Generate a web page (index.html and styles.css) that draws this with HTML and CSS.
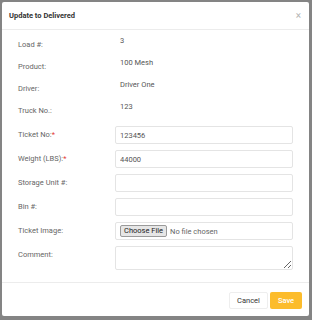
FILE: index.html
```html
<!DOCTYPE html>
<html lang="en">
<head>
  <meta charset="UTF-8" />
  <title>Update to Delivered</title>
  <link rel="stylesheet" href="styles.css">
</head>
<body>
  <div class="modal">
    <div class="modal-header">
      <h5 class="modal-title">Update to Delivered</h5>
      <span class="close">&times;</span>
    </div>
    <div class="modal-body">
      <div class="info">
        <div class="row"><label>Load #:</label><div class="value">3</div></div>
        <div class="row"><label>Product:</label><div class="value">100 Mesh</div></div>
        <div class="row"><label>Driver:</label><div class="value">Driver One</div></div>
        <div class="row"><label>Truck No.:</label><div class="value">123</div></div>
      </div>
      <div class="fields">
        <div class="row"><label>Ticket No:<span class="req">*</span></label><input class="input" type="text" value="123456"></div>
        <div class="row"><label>Weight (LBS):<span class="req">*</span></label><input class="input" type="text" value="44000"></div>
        <div class="row"><label>Storage Unit #:</label><input class="input" type="text"></div>
        <div class="row"><label>Bin #:</label><input class="input" type="text"></div>
        <div class="row">
          <label>Ticket Image:</label>
          <div class="input file-box"><span class="file-btn">Choose File</span><span class="file-name">No file chosen</span></div>
        </div>
        <div class="row"><label>Comment:</label><textarea class="input comment"></textarea></div>
      </div>
    </div>
    <div class="modal-footer">
      <button class="btn btn-cancel">Cancel</button>
      <button class="btn btn-save">Save</button>
    </div>
  </div>
</body>
</html>
```

FILE: styles.css
```css
body {
  margin: 0;
  padding: 2px 3px 4px 2px;
  background-color: #848484;
  font-family: Roboto, 'Liberation Sans', sans-serif;
  font-size: 7.5px;
}
.modal {
  width: 307px;
  background: #fff;
  border-radius: 2px;
  display: flex;
  flex-direction: column;
}
.modal-header {
  height: 27px;
  border-bottom: 1px solid #ececec;
  display: flex;
  align-items: center;
  justify-content: space-between;
  padding: 0 8px 0 7px;
}
.modal-title {
  margin: 0;
  font-size: 7.5px;
  font-weight: 700;
  color: #333;
}
.close {
  color: #b5b5b5;
  font-size: 10px;
  line-height: 10px;
}
.modal-body {
  padding: 6px 16px 12px 16px;
}
.info {
  display: flex;
  flex-direction: column;
  gap: 6px;
  margin-bottom: 8px;
}
.fields {
  display: flex;
  flex-direction: column;
  gap: 6px;
}
.row {
  display: grid;
  grid-template-columns: 97px 1fr;
}
.info .row {
  height: 16px;
}
label {
  padding-top: 4px;
  line-height: 10px;
  color: #666;
}
.req {
  color: #e53935;
}
.value {
  padding-left: 5px;
  line-height: 10px;
  color: #555;
}
.input {
  height: 18px;
  box-sizing: border-box;
  border: 1px solid #e4e4e4;
  border-radius: 2px;
  padding: 0 4px;
  margin: 0;
  font: inherit;
  color: #555;
  outline: none;
}
.comment {
  height: 24px;
  resize: vertical;
}
.file-box {
  display: flex;
  align-items: center;
  gap: 3px;
}
.file-btn {
  background: #e6e6e6;
  border: 1px solid #9a9a9a;
  border-radius: 2px;
  padding: 0 3px;
  line-height: 10px;
  color: #222;
}
.file-name {
  color: #666;
}
.modal-footer {
  border-top: 1px solid #ececec;
  display: flex;
  justify-content: flex-end;
  gap: 2px;
  padding: 9px 7px 7px 7px;
}
.btn {
  height: 17px;
  font: inherit;
  border-radius: 2px;
  cursor: pointer;
}
.btn-cancel {
  width: 39px;
  background: #fff;
  border: 1px solid #eee;
  color: #333;
}
.btn-save {
  width: 32px;
  background: #fcbc2c;
  border: none;
  color: #fff;
  font-weight: 500;
}
```
